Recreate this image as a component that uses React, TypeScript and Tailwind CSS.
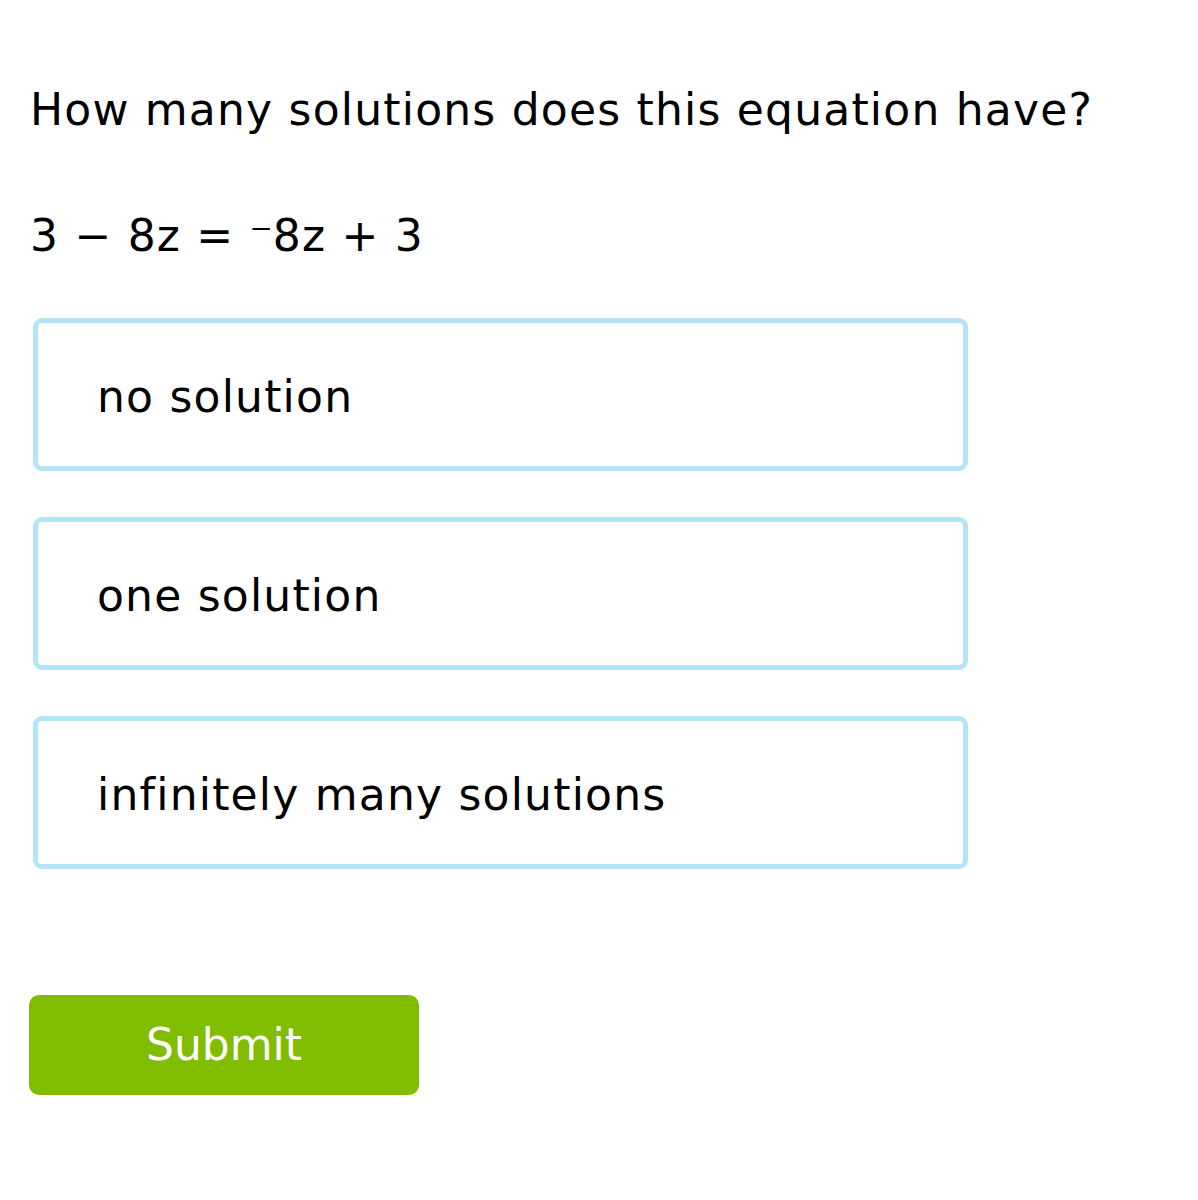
const choices = ['no solution', 'one solution', 'infinitely many solutions'];

export default function App() {
  return (
    <div className="min-h-[1200px] bg-white text-black pl-[30px] pt-[84px] tracking-[1.2px]" style={{ fontFamily: '"DejaVu Sans", Verdana, sans-serif' }}>
      <h1 className="text-[44px] leading-[52px] font-normal">How many solutions does this equation have?</h1>
      <p className="mt-[74px] text-[44px] leading-[52px] whitespace-pre">
        3 − 8z = <span className="tracking-normal">⁻</span>8z + 3
      </p>
      <div className="mt-[56px] ml-[3px] flex w-[935px] flex-col gap-[46px]">
        {choices.map(c => (
          <div key={c} className="flex h-[153px] items-center rounded-[9px] border-[5px] border-[#b3e4f7] pl-[59px] pt-[4px] text-[44px]">
            {c}
          </div>
        ))}
      </div>
      <button className="mt-[126px] -ml-[1px] flex h-[100px] w-[390px] items-center justify-center rounded-[10px] bg-[#80bc00] text-[44px] tracking-normal text-white">
        Submit
      </button>
    </div>
  );
}
